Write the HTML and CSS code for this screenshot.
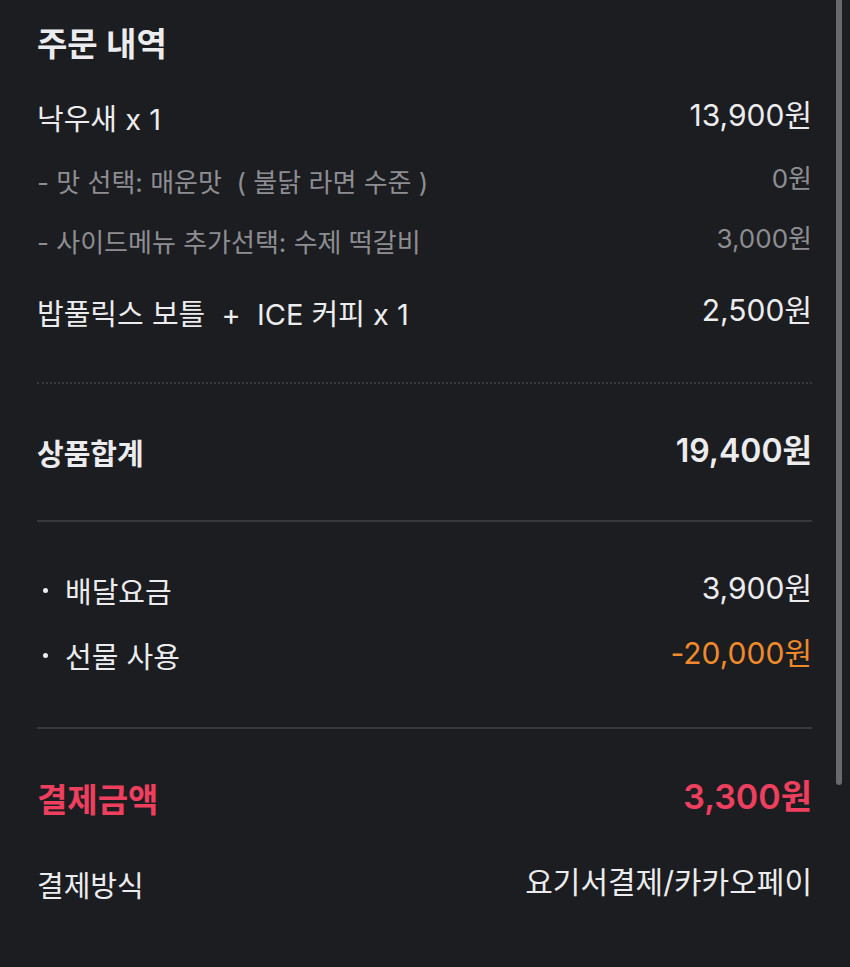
FILE: index.html
```html
<!DOCTYPE html>
<html lang="ko">
<head>
    <meta charset="UTF-8">
    <meta name="viewport" content="width=device-width, initial-scale=1.0">
    <title>주문 내역</title>
    <link rel="stylesheet" href="styles.css">
</head>
<body>
    <div class="sheet">
        <h1 class="title">주문 내역</h1>

        <div class="row item first">
            <span>낙우새 x 1</span>
            <span class="price">13,900원</span>
        </div>
        <div class="row option first-option">
            <span>- 맛 선택: 매운맛 &nbsp;( 불닭 라면 수준 )</span>
            <span class="price">0원</span>
        </div>
        <div class="row option">
            <span>- 사이드메뉴 추가선택: 수제 떡갈비</span>
            <span class="price">3,000원</span>
        </div>
        <div class="row item second">
            <span>밥풀릭스 보틀 &nbsp;+&nbsp; ICE 커피 x 1</span>
            <span class="price">2,500원</span>
        </div>

        <hr class="divider dotted">

        <div class="row subtotal">
            <span>상품합계</span>
            <span class="price">19,400원</span>
        </div>

        <hr class="divider solid">

        <div class="row fee">
            <span class="bullet">배달요금</span>
            <span class="price">3,900원</span>
        </div>
        <div class="row fee gift">
            <span class="bullet">선물 사용</span>
            <span class="price discount">-20,000원</span>
        </div>

        <hr class="divider solid last">

        <div class="row total">
            <span>결제금액</span>
            <span class="price">3,300원</span>
        </div>
        <div class="row method">
            <span>결제방식</span>
            <span class="price">요기서결제/카카오페이</span>
        </div>
    </div>

    <div class="scrollbar"></div>
</body>
</html>
```

FILE: styles.css
```css
body {
    margin: 0;
    padding: 0;
    background-color: #1c1d21;
    color: #ececee;
    font-family: Inter, "Noto Sans CJK KR", sans-serif;
}
.sheet {
    padding: 14px 38px 40px 37px;
}
.title {
    margin: 0;
    height: 60px;
    line-height: 60px;
    font-size: 33px;
    font-weight: 600;
}
.row {
    display: flex;
    justify-content: space-between;
    align-items: center;
    height: 60px;
    font-size: 29px;
}
.row .price {
    margin-bottom: 8px;
    font-size: 30px;
}
.item.first {
    margin-top: 13px;
}
.first-option {
    margin-top: 3px;
}
.row.option {
    font-size: 26px;
    color: #8d8d92;
}
.row.option .price {
    font-size: 26px;
}
.item.second {
    margin-top: 12px;
}
.divider {
    margin: 0;
    border: none;
}
.divider.dotted {
    margin-top: 40px;
    border-top: 2px dotted #38393e;
}
.divider.solid {
    margin-top: 38px;
    border-top: 2px solid #38393e;
}
.divider.last {
    margin-top: 42px;
}
.subtotal {
    margin-top: 38px;
    font-weight: 600;
}
.subtotal .price {
    font-size: 32px;
}
.fee {
    margin-top: 38px;
}
.fee.gift {
    margin-top: 5px;
}
.bullet {
    display: flex;
    align-items: center;
}
.bullet::before {
    content: "";
    width: 5px;
    height: 5px;
    margin: 0 17px 0 6px;
    border-radius: 50%;
    background-color: #ececee;
}
.discount {
    color: #f08a2a;
}
.row.total {
    margin-top: 39px;
    font-size: 33px;
    font-weight: 600;
    color: #ee3f5e;
}
.row.total .price {
    font-size: 34px;
}
.row.method {
    margin-top: 26px;
}
.row.method .price {
    font-size: 30px;
}
.scrollbar {
    position: absolute;
    top: 0;
    right: 8px;
    width: 6px;
    height: 785px;
    border-radius: 0 0 3px 3px;
    background-color: #68686d;
}
```
